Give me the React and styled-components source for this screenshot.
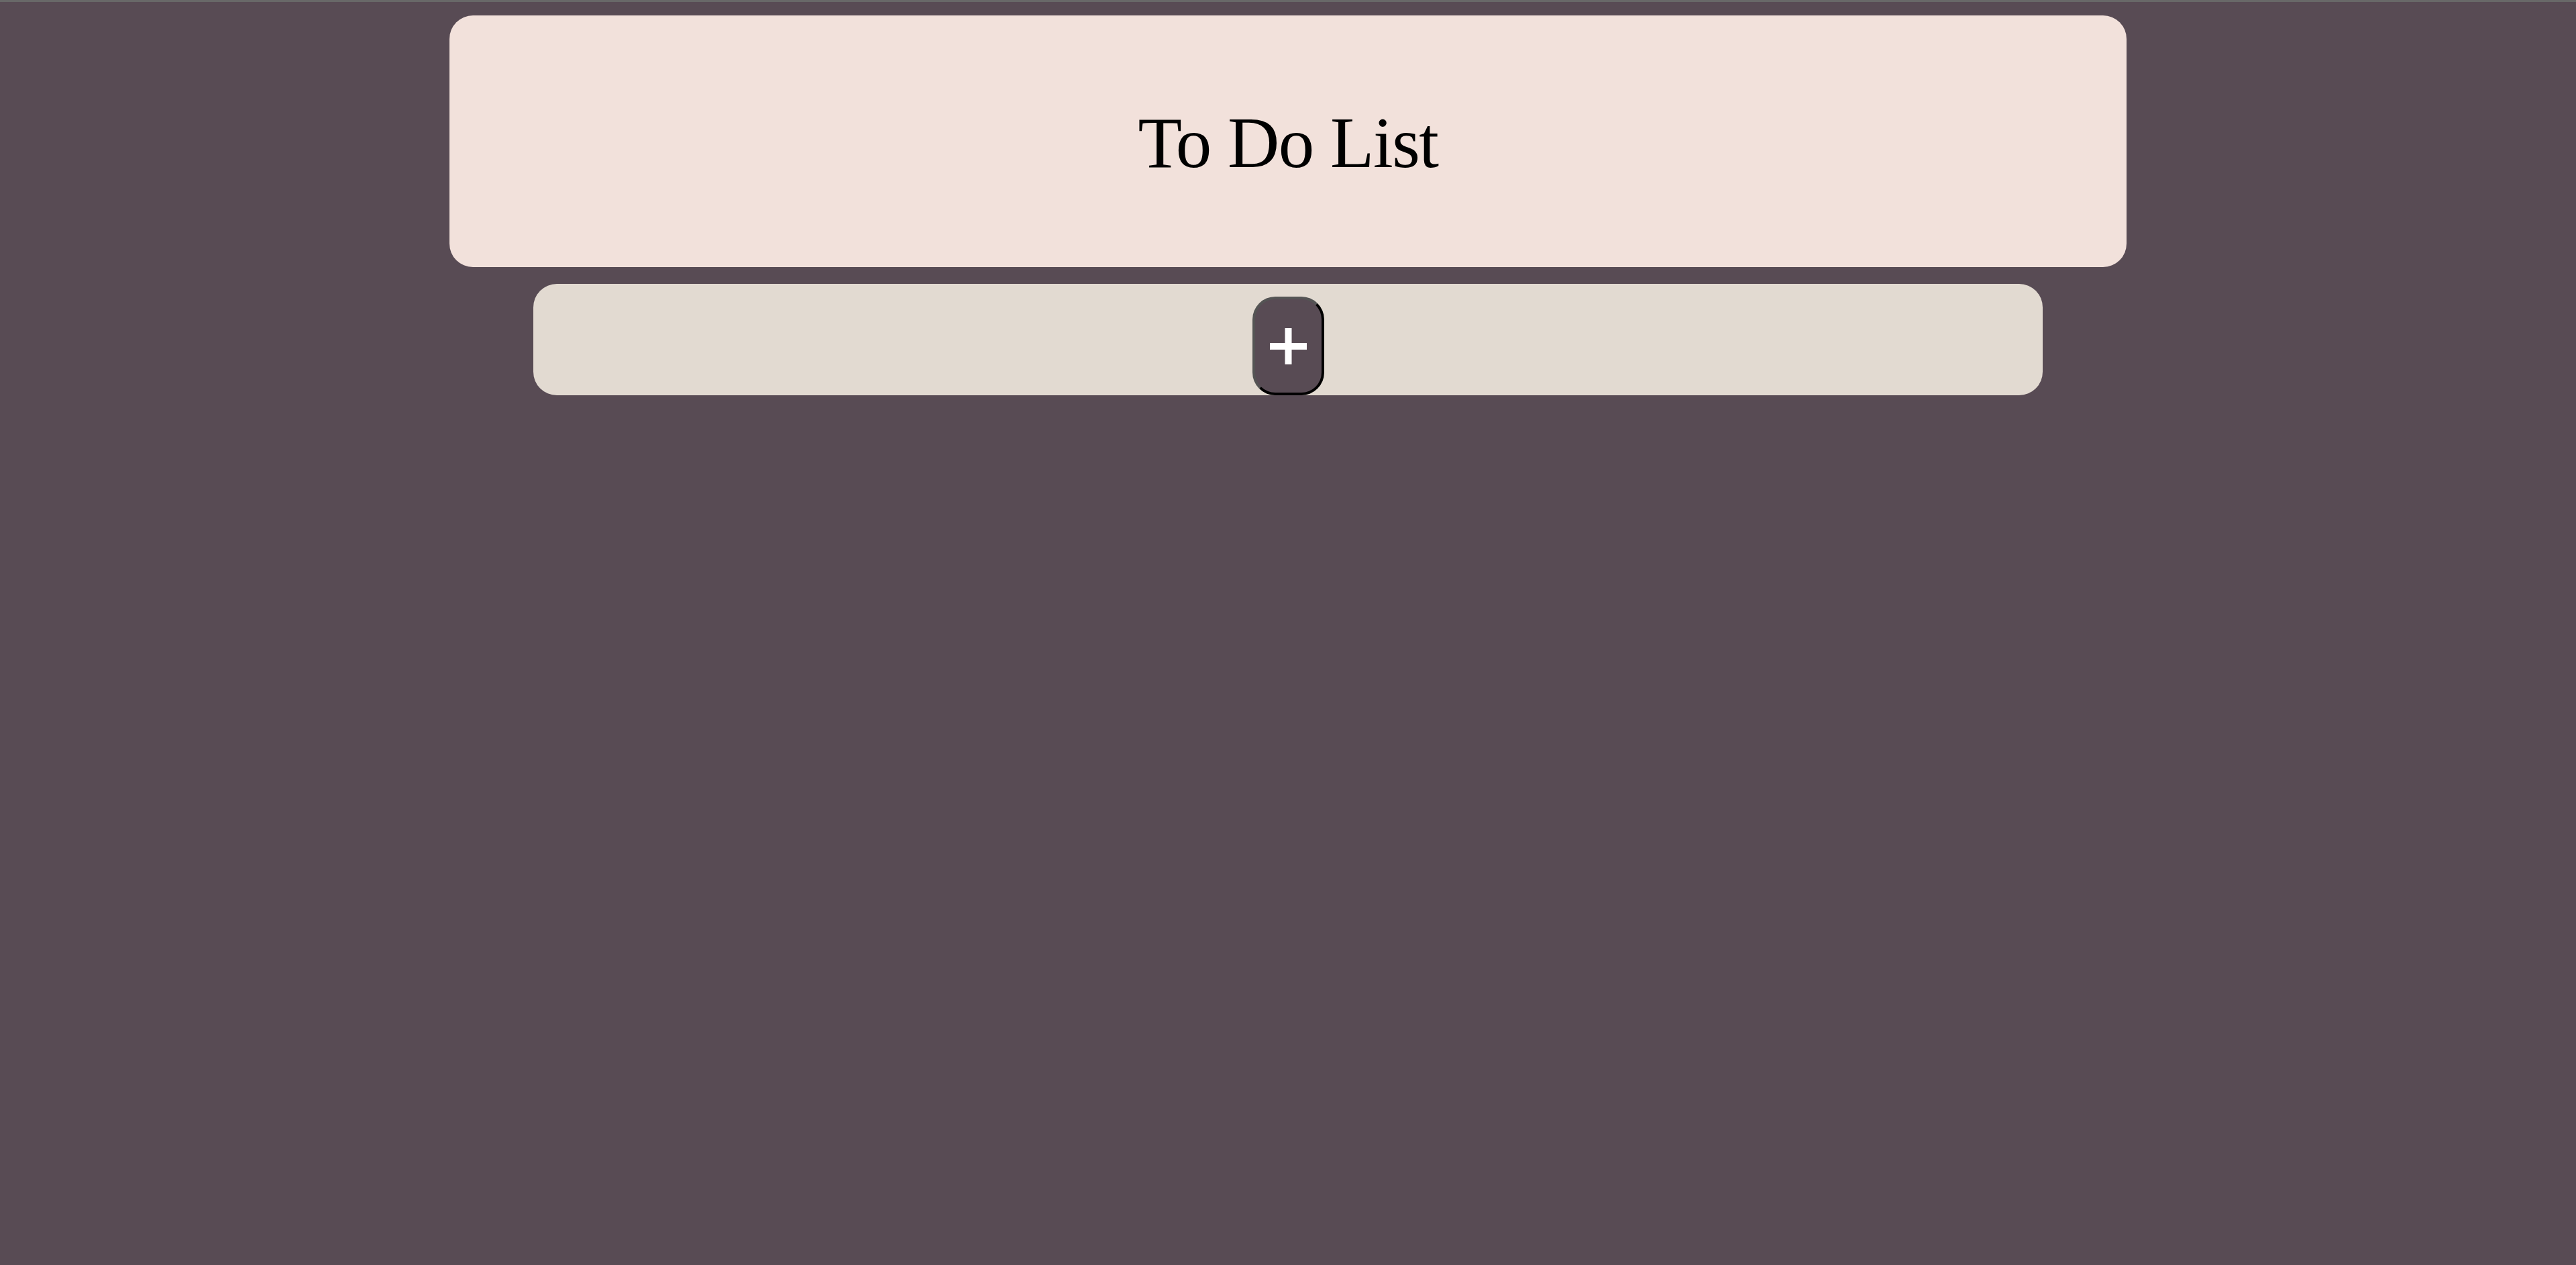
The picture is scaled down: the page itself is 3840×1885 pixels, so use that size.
import React from "react";
import styled, { createGlobalStyle } from "styled-components";

const GlobalStyle = createGlobalStyle`
  html, body {
    margin: 0;
    padding: 0;
    background: #584b54;
  }
  body {
    min-height: 100vh;
    border-top: 3px solid #686868;
    box-sizing: border-box;
  }
`;

const Page = styled.main`
  display: flex;
  flex-direction: column;
  align-items: center;
  padding-top: 20px;
  gap: 25px;
`;

const HeaderCard = styled.header`
  width: 2500px;
  height: 375px;
  box-sizing: border-box;
  background: #f2e1db;
  border-radius: 35px;
  display: flex;
  justify-content: center;
  align-items: flex-start;
  padding-top: 137px;
`;

const Title = styled.h1`
  margin: 0;
  font-family: "Liberation Serif", "Times New Roman", serif;
  font-weight: 400;
  font-size: 107px;
  letter-spacing: -1.5px;
  line-height: 1;
  color: #000;
`;

const AddBar = styled.section`
  width: 2250px;
  height: 166px;
  box-sizing: border-box;
  background: #e2dad1;
  border-radius: 35px;
  display: flex;
  justify-content: center;
  align-items: flex-end;
`;

const AddButton = styled.button`
  width: 107px;
  height: 147px;
  box-sizing: border-box;
  background: #584b54;
  border: 4px outset black;
  border-radius: 34px;
  display: flex;
  align-items: center;
  justify-content: center;
  padding: 0;
  cursor: pointer;
`;

const PlusIcon = () => (
  <svg width="55" height="54" viewBox="0 0 55 54">
    <rect x="22.5" y="0" width="10" height="54" fill="#fff" />
    <rect x="0" y="22" width="55" height="10" fill="#fff" />
  </svg>
);

export default function App() {
  return (
    <>
      <GlobalStyle />
      <Page>
        <HeaderCard>
          <Title>To Do List</Title>
        </HeaderCard>
        <AddBar>
          <AddButton aria-label="Add task">
            <PlusIcon />
          </AddButton>
        </AddBar>
      </Page>
    </>
  );
}
